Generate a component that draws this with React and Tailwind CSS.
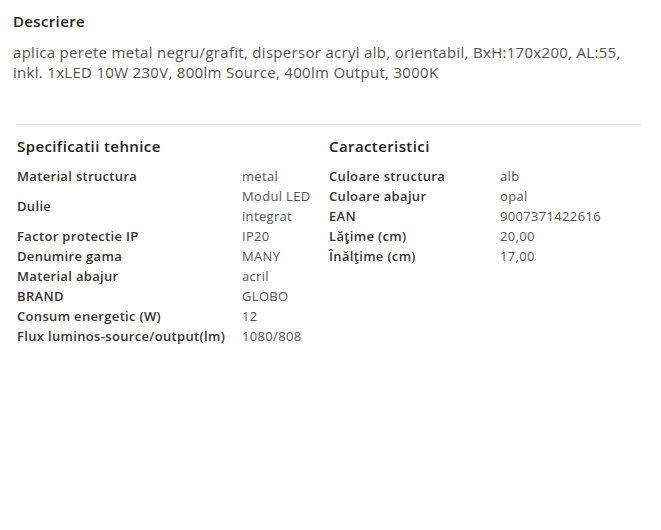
import React from 'react';

const specs = [
  ['Material structura', 'metal'],
  ['Dulie', 'Modul LED integrat'],
  ['Factor protectie IP', 'IP20'],
  ['Denumire gama', 'MANY'],
  ['Material abajur', 'acril'],
  ['BRAND', 'GLOBO'],
  ['Consum energetic (W)', '12'],
  ['Flux luminos-source/output(lm)', '1080/808'],
];

const caracteristici = [
  ['Culoare structura', 'alb'],
  ['Culoare abajur', 'opal'],
  ['EAN', '9007371422616'],
  ['Lăţime (cm)', '20,00'],
  ['Înălţime (cm)', '17,00'],
];

const SpecTable = ({ title, rows, labelWidth, className }) => (
  <div className={className}>
    <h3 className="text-[15px] font-semibold text-[#222] leading-5 tracking-[0.4px] mb-[10px]">{title}</h3>
    <div className={`grid ${labelWidth} text-[13px] leading-5 tracking-[0.33px]`}>
      {rows.map(([label, value]) => (
        <React.Fragment key={label}>
          <div className="font-semibold text-[#333] flex items-center">{label}</div>
          <div className="text-[#555]">{value}</div>
        </React.Fragment>
      ))}
    </div>
  </div>
);

export default function App() {
  return (
    <div className="bg-white min-h-[530px] w-[661px] pt-[11px] font-['Open_Sans',sans-serif]">
      <div className="px-[13px]">
        <h2 className="text-[15px] font-semibold text-[#222] leading-5 tracking-[0.35px]">Descriere</h2>
        <p className="mt-[11px] text-[15px] leading-5 text-[#555] tracking-[0.3px]">
          aplica perete metal negru/grafit, dispersor acryl alb, orientabil, BxH:170x200, AL:55, inkl. 1xLED 10W 230V, 800lm Source, 400lm Output, 3000K
        </p>
      </div>

      <div className="ml-[16px] mr-[20px] mt-[42px] border-t border-[#dddddd]" />

      <div className="flex ml-[17px] mt-[11px]">
        <SpecTable title="Specificatii tehnice" rows={specs} labelWidth="grid-cols-[225px_75px]" className="w-[312px]" />
        <SpecTable title="Caracteristici" rows={caracteristici} labelWidth="grid-cols-[171px_1fr]" className="w-[312px]" />
      </div>
    </div>
  );
}
